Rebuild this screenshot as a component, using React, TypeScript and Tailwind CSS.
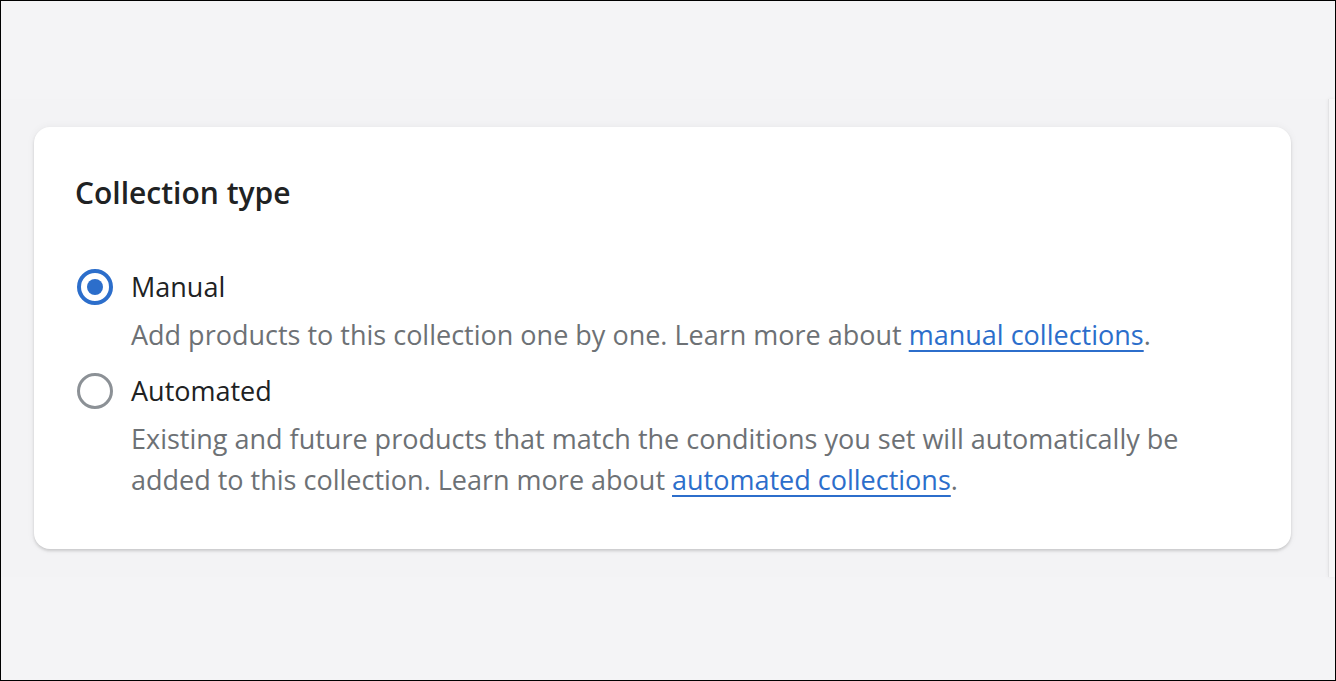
import React, { useState } from 'react';

type Option = {
  id: string;
  label: string;
  before: string;
  link: string;
  after: string;
};

const options: Option[] = [
  {
    id: 'manual',
    label: 'Manual',
    before: 'Add products to this collection one by one. Learn more about ',
    link: 'manual collections',
    after: '.',
  },
  {
    id: 'automated',
    label: 'Automated',
    before:
      'Existing and future products that match the conditions you set will automatically be added to this collection. Learn more about ',
    link: 'automated collections',
    after: '.',
  },
];

function Radio({ checked }: { checked: boolean }) {
  return (
    <span className="flex h-[41px] w-10 shrink-0 items-center justify-center">
      {checked ? (
        <span className="flex h-9 w-9 items-center justify-center rounded-full border-[4px] border-[#2c6ecb] bg-white">
          <span className="h-4 w-4 rounded-full bg-[#2c6ecb]" />
        </span>
      ) : (
        <span className="h-9 w-9 rounded-full border-[3px] border-[#8c9196] bg-white" />
      )}
    </span>
  );
}

function App() {
  const [type, setType] = useState('manual');

  return (
    <div className="h-[681px] w-[1336px] overflow-hidden border border-black bg-[#f4f4f6] font-['Open_Sans',sans-serif] text-[#202223]">
      <div className="mt-[98px] flex h-[478px] bg-[#f3f3f5]">
        <div className="ml-[33px] mt-[28px] h-[422px] w-[1257px] shrink-0 rounded-[16px] bg-white px-[41px] pt-[48px] shadow-[0_0_8px_rgba(23,24,24,0.05),0_2px_3px_rgba(0,0,0,0.15)]">
          <h2 className="text-[30px] font-semibold leading-[36px]">Collection type</h2>

          <div className="mt-[55px] flex flex-col">
            {options.map((o, i) => (
              <label
                key={o.id}
                className={`flex cursor-pointer gap-4 ${i > 0 ? 'mt-[15px]' : ''}`}
                onClick={() => setType(o.id)}
              >
                <Radio checked={type === o.id} />
                <div className="flex flex-col">
                  <span className="text-[27px] leading-[41px]">{o.label}</span>
                  <p className="mt-[7px] max-w-[1050px] text-[27px] leading-[41px] text-[#6d7175]">
                    {o.before}
                    <a href="#" className="text-[#2c6ecb] underline decoration-[1.5px] underline-offset-[5px]">
                      {o.link}
                    </a>
                    {o.after}
                  </p>
                </div>
              </label>
            ))}
          </div>
        </div>
        <div className="ml-[37px] w-[20px] border-l border-[#e3e3e5] bg-[#f6f6f7] shadow-[0_0_4px_rgba(0,0,0,0.06)]" />
      </div>
    </div>
  );
}

export default App;
